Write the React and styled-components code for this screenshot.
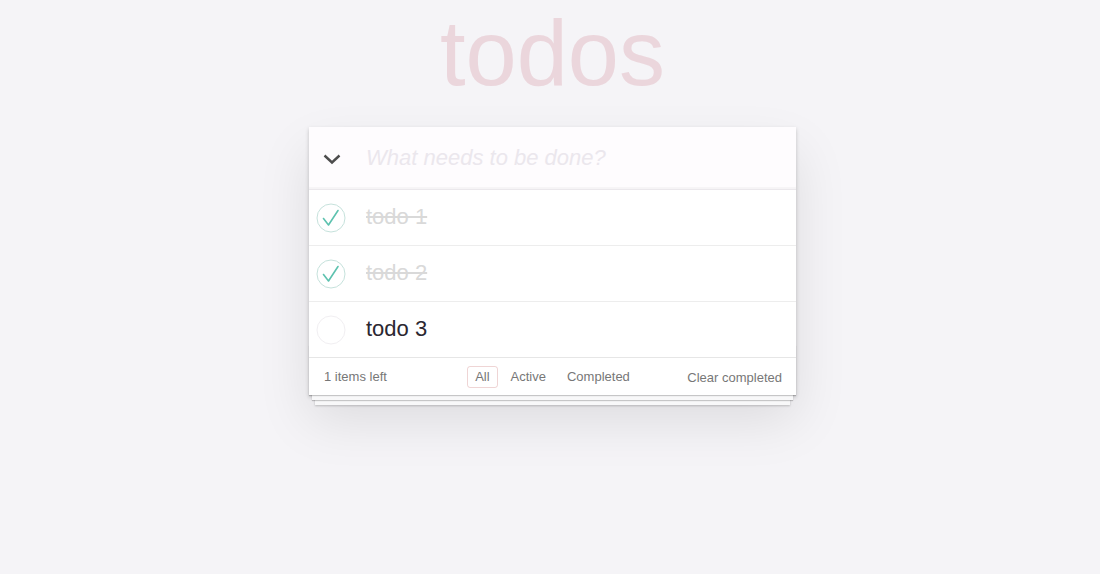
import React from "react";
import styled, { createGlobalStyle, css } from "styled-components";

const GlobalStyle = createGlobalStyle`
  html, body {
    margin: 0;
    padding: 0;
    background: #f5f4f7;
  }
  body {
    font-family: "Liberation Sans", Arial, Helvetica, sans-serif;
    -webkit-font-smoothing: antialiased;
  }
  * { box-sizing: border-box; }
`;

const Page = styled.div`
  min-height: 100vh;
  padding: 6px 0 40px 5px;
  display: flex;
  flex-direction: column;
  align-items: center;
`;

const Title = styled.h1`
  margin: 0 0 26px;
  font-size: 92px;
  line-height: 95px;
  font-weight: 400;
  color: #ebd6dc;
  text-align: center;
  letter-spacing: 0;
`;

const Card = styled.section`
  width: 487px;
  background: #fff;
  position: relative;
  box-shadow: 0 2px 4px rgba(0, 0, 0, 0.2), 0 25px 50px rgba(0, 0, 0, 0.1);
`;

const Header = styled.header`
  display: flex;
  align-items: center;
  height: 63px;
  background: #fefcfe;
  box-shadow: inset 0 -2px 1px rgba(0, 0, 0, 0.03);
  border-bottom: 1px solid #ebe8ec;
`;

const ToggleAll = styled.button`
  width: 46px;
  height: 100%;
  display: flex;
  align-items: center;
  justify-content: center;
  padding: 2px 0 0;
  border: none;
  background: transparent;
  cursor: pointer;
`;

const NewTodo = styled.input`
  flex: 1;
  min-width: 0;
  border: none;
  outline: none;
  background: transparent;
  padding: 0 0 0 11px;
  font-family: inherit;
  font-size: 22px;
  color: #4d4d4d;
  &::placeholder {
    font-style: italic;
    color: #ebe7ed;
  }
`;

const List = styled.ul`
  list-style: none;
  margin: 0;
  padding: 0;
`;

const Row = styled.li`
  display: flex;
  align-items: center;
  height: 56px;
  border-bottom: 1px solid #ededed;
  &:last-child {
    border-bottom: none;
    height: 55px;
  }
`;

const Check = styled.span`
  width: 30px;
  height: 30px;
  margin-left: 7px;
  display: flex;
  flex-shrink: 0;
`;

const Label = styled.label`
  margin-left: 20px;
  font-size: 22px;
  line-height: 1.2;
  color: #2b2731;
  ${(p) =>
    p.$done &&
    css`
      color: #d9d9d9;
      text-decoration: line-through;
    `}
`;

const Footer = styled.footer`
  position: relative;
  height: 38px;
  padding: 0 14px 0 15px;
  display: grid;
  grid-template-columns: 1fr auto 1fr;
  align-items: center;
  font-size: 13px;
  color: #777;
  border-top: 1px solid #e6e6e6;
  &::before {
    content: "";
    position: absolute;
    right: 0;
    bottom: 0;
    left: 0;
    height: 50px;
    overflow: hidden;
    pointer-events: none;
    box-shadow: 0 1px 1px rgba(0, 0, 0, 0.2), 0 8px 0 -3px #f8f8f9,
      0 9px 1px -3px rgba(0, 0, 0, 0.2), 0 16px 0 -6px #f8f8f9,
      0 17px 2px -6px rgba(0, 0, 0, 0.2);
  }
`;

const Count = styled.span`
  position: relative;
`;

const Filters = styled.ul`
  position: relative;
  list-style: none;
  margin: 0 0 0 -1px;
  padding: 0;
  display: flex;
  gap: 5px;
`;

const FilterLink = styled.a`
  display: block;
  padding: 3px 7px;
  line-height: 14px;
  border: 1px solid ${(p) => (p.$selected ? "rgba(175, 47, 47, 0.2)" : "transparent")};
  border-radius: 3px;
  color: #777;
  text-decoration: none;
  cursor: pointer;
`;

const Clear = styled.button`
  position: relative;
  justify-self: end;
  border: none;
  background: transparent;
  padding: 1px 0 0;
  font-family: inherit;
  font-size: 13px;
  color: #777;
  cursor: pointer;
`;

const Chevron = () => (
  <svg width="18" height="11" viewBox="0 0 18 11">
    <polyline
      points="1.5,1.5 9,8.5 16.5,1.5"
      fill="none"
      stroke="#4d4d4d"
      strokeWidth="2.4"
    />
  </svg>
);

const CheckIcon = ({ done }) => (
  <svg width="30" height="30" viewBox="0 0 30 30">
    <circle
      cx="15"
      cy="15"
      r="14"
      fill="none"
      stroke={done ? "#c6e2dc" : "#f1eff2"}
      strokeWidth="1"
    />
    {done && (
      <polyline
        points="7.5,15.5 12.5,22 22,7.5"
        fill="none"
        stroke="#5dc2af"
        strokeWidth="1.6"
        strokeLinecap="round"
        strokeLinejoin="round"
      />
    )}
  </svg>
);

const todos = [
  { id: 1, title: "todo 1", done: true },
  { id: 2, title: "todo 2", done: true },
  { id: 3, title: "todo 3", done: false },
];

export default function App() {
  return (
    <>
      <GlobalStyle />
      <Page>
        <Title>todos</Title>
        <Card>
          <Header>
            <ToggleAll aria-label="Toggle all">
              <Chevron />
            </ToggleAll>
            <NewTodo placeholder="What needs to be done?" />
          </Header>
          <List>
            {todos.map((t) => (
              <Row key={t.id}>
                <Check>
                  <CheckIcon done={t.done} />
                </Check>
                <Label $done={t.done}>{t.title}</Label>
              </Row>
            ))}
          </List>
          <Footer>
            <Count>1 items left</Count>
            <Filters>
              <li>
                <FilterLink $selected>All</FilterLink>
              </li>
              <li>
                <FilterLink>Active</FilterLink>
              </li>
              <li>
                <FilterLink>Completed</FilterLink>
              </li>
            </Filters>
            <Clear>Clear completed</Clear>
          </Footer>
        </Card>
      </Page>
    </>
  );
}
